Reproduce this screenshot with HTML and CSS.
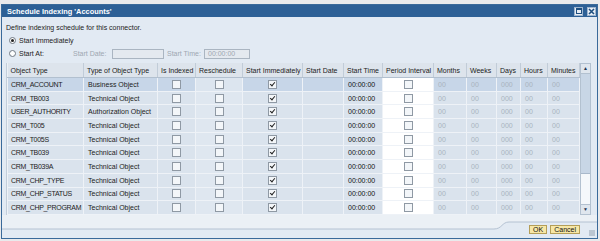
FILE: index.html
```html
<!DOCTYPE html>
<html lang="en">
  <head>
    <meta charset="UTF-8" />
    <title>Schedule Indexing</title>
    <link rel="stylesheet" href="styles.css">
  </head>
  <body>
    <div class="window">
      <div class="titlebar">
        <span class="title">Schedule Indexing 'Accounts'</span>
        <div class="tb-buttons">
          <span class="tb-btn"><span class="max-box"></span></span>
          <span class="tb-btn">
            <svg width="7" height="7" viewBox="0 0 7 7"><path d="M1 1 L6 6 M6 1 L1 6" stroke="#1e4f80" stroke-width="1.6"/></svg>
          </span>
        </div>
      </div>

      <div class="content">
        <p class="intro">Define indexing schedule for this connector.</p>
        <div class="opt"><span class="radio on"></span>Start Immediately</div>
        <div class="opt">
          <span class="radio"></span><span class="at-label">Start At:</span>
          <span class="dim date-label">Start Date:</span><span class="field date-field"></span>
          <span class="dim time-label">Start Time:</span><span class="field time-field">00:00:00</span>
        </div>

        <div class="grid-wrap">
          <table class="grid">
            <colgroup>
              <col style="width:76px"><col style="width:74px"><col style="width:38px"><col style="width:47px">
              <col style="width:60px"><col style="width:41px"><col style="width:39px"><col style="width:51px">
              <col style="width:33px"><col style="width:30px"><col style="width:24px"><col style="width:27px"><col style="width:32px">
            </colgroup>
            <thead>
              <tr>
                <th>Object Type</th><th>Type of Object Type</th><th>Is Indexed</th><th>Reschedule</th>
                <th>Start Immediately</th><th>Start Date</th><th>Start Time</th><th>Period Interval</th>
                <th>Months</th><th>Weeks</th><th>Days</th><th>Hours</th><th>Minutes</th>
              </tr>
            </thead>
            <tbody id="rows"></tbody>
          </table>
          <div class="scrollbar">
            <span class="sb-btn">&#9650;</span>
            <span class="sb-thumb"></span>
            <span class="sb-track"></span>
            <span class="sb-btn">&#9660;</span>
          </div>
        </div>
      </div>

      <div class="footer">
        <svg class="footer-line" width="595" height="25" viewBox="0 0 595 25">
          <path d="M0 0 H595 V7 H507 C500 7 500 14 492 14 H0 Z" fill="#ebf0f5"/>
          <path d="M0 14 H492 C500 14 500 7 507 7 H595" fill="none" stroke="#b4c2d2" stroke-width="1"/>
        </svg>
        <button class="btn">OK</button>
        <button class="btn">Cancel</button>
        <span class="grip"></span>
      </div>
    </div>

    <script>
      const objects = [
        ["CRM_ACCOUNT", "Business Object"],
        ["CRM_TB003", "Technical Object"],
        ["USER_AUTHORITY", "Authorization Object"],
        ["CRM_T005", "Technical Object"],
        ["CRM_T005S", "Technical Object"],
        ["CRM_TB039", "Technical Object"],
        ["CRM_TB039A", "Technical Object"],
        ["CRM_CHP_TYPE", "Technical Object"],
        ["CRM_CHP_STATUS", "Technical Object"],
        ["CRM_CHP_PROGRAM", "Technical Object"]
      ];

      const tbody = document.getElementById("rows");

      objects.forEach((obj, i) => {
        const tr = document.createElement("tr");
        if (i === 0) tr.className = "selected";
        tr.innerHTML =
          `<td class="name">${obj[0]}</td><td>${obj[1]}</td>` +
          `<td class="c"><span class="cb"></span></td>` +
          `<td class="c resched"><span class="cb"></span></td>` +
          `<td class="c"><span class="cb checked"></span></td>` +
          `<td></td><td class="time">00:00:00</td>` +
          `<td class="c period"><span class="cb"></span></td>` +
          `<td class="num">00</td><td class="num">00</td><td class="num">000</td>` +
          `<td class="num">00</td><td class="num">00</td>`;
        tbody.appendChild(tr);
      });
    </script>
  </body>
</html>
```

FILE: styles.css
```css
body {
    margin: 0;
    background-color: #e9eaec;
    font-family: "Liberation Sans", Arial, sans-serif;
    font-size: 7px;
    color: #222;
}

.window {
    margin: 4px 0 0 1px;
    width: 597px;
    height: 235px;
    border: 1px solid #3a6a9a;
    background-color: #e2eaf3;
    box-sizing: border-box;
    display: flex;
    flex-direction: column;
}

.titlebar {
    height: 12px;
    background-color: #2d6096;
    display: flex;
    align-items: center;
    justify-content: space-between;
    padding: 0 1px 0 5px;
}

.title {
    color: #fff;
    font-weight: bold;
    font-size: 7.4px;
}

.tb-buttons {
    display: flex;
    gap: 4px;
}

.tb-btn {
    width: 7px;
    height: 7px;
    background: #e8eef5;
    border: 1px solid #9fb6cf;
    display: flex;
    align-items: center;
    justify-content: center;
}

.max-box {
    width: 4px;
    height: 3px;
    border: 1px solid #1e4f80;
    border-top-width: 2px;
}

.content {
    padding: 5px 4px 0 4px;
}

.intro {
    margin: 0;
    line-height: 12px;
}

.opt {
    height: 13px;
    display: flex;
    align-items: center;
}

.radio {
    width: 5px;
    height: 5px;
    border: 1px solid #6f7882;
    border-radius: 50%;
    background: #fff;
    margin: 0 3px 0 3px;
    position: relative;
}

.radio.on::after {
    content: "";
    position: absolute;
    left: 1px;
    top: 1px;
    width: 3px;
    height: 3px;
    border-radius: 50%;
    background: #222;
}

.at-label {
    width: 54px;
}

.dim {
    color: #9ea7b1;
}

.date-label {
    width: 39px;
}

.time-label {
    width: 37px;
}

.field {
    height: 8px;
    border: 1px solid #aab5c1;
    background: #e4e9ef;
    color: #9ea7b1;
    line-height: 8px;
    padding-left: 3px;
    box-sizing: content-box;
}

.date-field {
    width: 47px;
    margin-right: 3px;
}

.time-field {
    width: 41px;
}

.grid-wrap {
    margin-top: 3px;
    width: 584px;
    display: flex;
    border-left: 1px solid #c3ceda;
    background: #ebf0f5;
}

.grid {
    border-collapse: collapse;
    table-layout: fixed;
    width: 572px;
}

.grid th {
    height: 14px;
    padding: 0 0 0 3px;
    background-color: #dde4ec;
    border-right: 1px solid #c1ccd8;
    border-bottom: 1px solid #b2c0cf;
    font-weight: normal;
    text-align: left;
    white-space: nowrap;
    overflow: hidden;
    color: #222;
}

.grid td {
    height: 12.5px;
    padding: 0 0 0 4px;
    background-color: #dae3ed;
    border: 1px solid #eef2f7;
    white-space: nowrap;
    overflow: hidden;
}

.grid td.name {
    padding-left: 3px;
    letter-spacing: -0.3px;
}

.grid td.c {
    text-align: center;
    padding: 0;
}

.grid td.resched {
    background-color: #dfe7f0;
}

.grid td.period {
    background-color: #fff;
}

.grid td.time {
    color: #111;
}

.grid td.num {
    color: #a9b3be;
}

.grid tr.selected td {
    background-color: #c7d6e8;
}

.grid tr.selected td.resched {
    background-color: #dce5ef;
}

.grid tr.selected td.period {
    background-color: #fff;
}

.cb {
    display: inline-block;
    width: 7px;
    height: 7px;
    border: 1px solid #8f99a4;
    background: #f3f6f9;
    vertical-align: middle;
    position: relative;
}

.cb.checked::after {
    content: "";
    position: absolute;
    left: 2px;
    top: 0;
    width: 2px;
    height: 4px;
    border: solid #222;
    border-width: 0 1.5px 1.5px 0;
    transform: rotate(40deg);
}

.scrollbar {
    width: 9px;
    height: 150px;
    display: flex;
    flex-direction: column;
    border: 1px solid #b3c1d0;
    background: #f5f8fb;
}

.sb-btn {
    height: 9px;
    background: #dfe6ee;
    border-bottom: 1px solid #b3c1d0;
    font-size: 5px;
    line-height: 9px;
    text-align: center;
    color: #1f3550;
}

.sb-btn:last-child {
    border-bottom: none;
    border-top: 1px solid #b3c1d0;
}

.sb-thumb {
    height: 99px;
    background: #c8d6e6;
    border-bottom: 1px solid #a9b9cb;
}

.sb-track {
    flex: 1;
}

.footer {
    position: relative;
    flex: 1;
    display: flex;
    justify-content: flex-end;
    align-items: flex-end;
    gap: 3px;
    padding: 0 17px 4px 0;
}

.footer-line {
    position: absolute;
    left: 0;
    top: 0;
}

.btn {
    position: relative;
    height: 9px;
    padding: 0 3px;
    font-family: "Liberation Sans", Arial, sans-serif;
    font-size: 7px;
    line-height: 7px;
    background: #f7e7a6;
    border: 1px solid #b49e58;
    border-radius: 0;
    color: #111;
}

.grip {
    position: absolute;
    right: 2px;
    bottom: 2px;
    width: 6px;
    height: 6px;
    background: radial-gradient(circle, #8e9aa8 0.6px, transparent 0.8px) 0 0 / 2px 2px;
}
```
